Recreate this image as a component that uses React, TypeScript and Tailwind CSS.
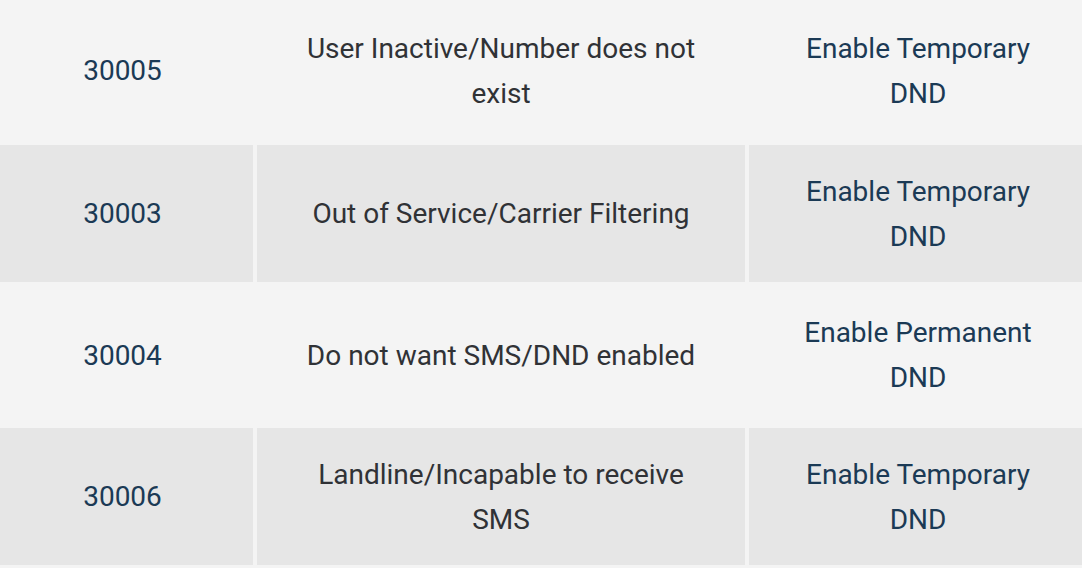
import React from "react";

type Row = {
    code: string
    desc: string
    action: string
    h: string
}

const rows: Row[] = [
    {code: "30005", desc: "User Inactive/Number does not exist", action: "Enable Temporary DND", h: "h-[141px]"},
    {code: "30003", desc: "Out of Service/Carrier Filtering", action: "Enable Temporary DND", h: "h-[137px]"},
    {code: "30004", desc: "Do not want SMS/DND enabled", action: "Enable Permanent DND", h: "h-[138px]"},
    {code: "30006", desc: "Landline/Incapable to receive SMS", action: "Enable Temporary DND", h: "h-[137px]"},
]

export default function App() {
    return (
        <div className="w-[1082px] h-[568px] overflow-hidden bg-[#f4f4f4]" style={{fontFamily: "Roboto, 'Liberation Sans', sans-serif"}}>
            <div className="ml-[-8px] w-[1095px] grid grid-cols-[261px_488px_1fr] gap-[4px] pb-[3px] text-[28px] leading-[45px] text-center">
                {rows.map((row, i) => {
                    // every second row gets the grey fill
                    const bg = i % 2 === 1 ? "bg-[#e6e6e6]" : "bg-[#f4f4f4]"
                    return (
                        <React.Fragment key={row.code}>
                            <div className={`${bg} ${row.h} flex items-center justify-center px-10 text-[#1b3a55]`}>{row.code}</div>
                            <div className={`${bg} ${row.h} flex items-center justify-center px-10 text-[#303236]`}>{row.desc}</div>
                            <div className={`${bg} ${row.h} flex items-center justify-center px-10 text-[#1b3a55]`}>{row.action}</div>
                        </React.Fragment>
                    )
                })}
            </div>
        </div>
    )
}
